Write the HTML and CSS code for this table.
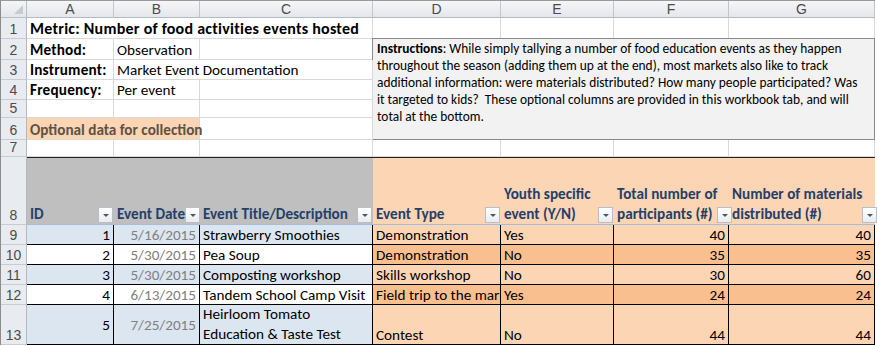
FILE: index.html
```html
<!DOCTYPE html>
<html>
<head>
<meta charset="utf-8">
<link rel="stylesheet" href="styles.css">
</head>
<body>
<div class="sheet">
  <!-- column header row -->
  <div class="corner"><span class="tri"></span></div>
  <div class="colhdr">A</div>
  <div class="colhdr">B</div>
  <div class="colhdr">C</div>
  <div class="colhdr">D</div>
  <div class="colhdr">E</div>
  <div class="colhdr">F</div>
  <div class="colhdr">G</div>

  <!-- row 1 -->
  <div class="rowhdr">1</div>
  <div class="cell span3 title">Metric: Number of food activities events hosted</div>
  <div class="cell"></div>
  <div class="cell"></div>
  <div class="cell"></div>
  <div class="cell"></div>

  <!-- row 2 -->
  <div class="rowhdr">2</div>
  <div class="cell label">Method:</div>
  <div class="cell">Observation</div>
  <div class="cell"></div>
  <div class="instructions">
    <p><b>Instructions</b>: While simply tallying a number of food education events as they happen<br>throughout the season (adding them up at the end), most markets also like to track<br>additional information: were materials distributed? How many people participated? Was<br>it targeted to kids?&nbsp; These optional columns are provided in this workbook tab, and will<br>total at the bottom.</p>
  </div>

  <!-- row 3 -->
  <div class="rowhdr">3</div>
  <div class="cell label">Instrument:</div>
  <div class="cell span2">Market Event Documentation</div>

  <!-- row 4 -->
  <div class="rowhdr">4</div>
  <div class="cell label">Frequency:</div>
  <div class="cell">Per event</div>
  <div class="cell"></div>

  <!-- row 5 -->
  <div class="rowhdr">5</div>
  <div class="cell"></div>
  <div class="cell"></div>
  <div class="cell"></div>

  <!-- row 6 -->
  <div class="rowhdr">6</div>
  <div class="cell span2 optional">Optional data for collection</div>
  <div class="cell"></div>

  <!-- row 7 -->
  <div class="rowhdr">7</div>
  <div class="cell"></div>
  <div class="cell"></div>
  <div class="cell"></div>
  <div class="cell"></div>
  <div class="cell"></div>
  <div class="cell"></div>
  <div class="cell"></div>

  <!-- row 8 table header -->
  <div class="rowhdr">8</div>
  <div class="th gray"><span>ID</span><i class="dd"></i></div>
  <div class="th gray"><span>Event Date</span><i class="dd"></i></div>
  <div class="th gray"><span>Event Title/Description</span><i class="dd"></i></div>
  <div class="th peach"><span>Event Type</span><i class="dd"></i></div>
  <div class="th peach"><span>Youth specific<br>event (Y/N)</span><i class="dd"></i></div>
  <div class="th peach"><span>Total number of<br>participants (#)</span><i class="dd"></i></div>
  <div class="th peach last"><span>Number of materials<br>distributed (#)</span><i class="dd"></i></div>

  <!-- row 9 -->
  <div class="rowhdr">9</div>
  <div class="td blue num">1</div>
  <div class="td blue date">5/16/2015</div>
  <div class="td blue">Strawberry Smoothies</div>
  <div class="td p1">Demonstration</div>
  <div class="td p1">Yes</div>
  <div class="td p1 num">40</div>
  <div class="td p1 num">40</div>

  <!-- row 10 -->
  <div class="rowhdr">10</div>
  <div class="td white num">2</div>
  <div class="td white date">5/30/2015</div>
  <div class="td white">Pea Soup</div>
  <div class="td p2">Demonstration</div>
  <div class="td p2">No</div>
  <div class="td p2 num">35</div>
  <div class="td p2 num">35</div>

  <!-- row 11 -->
  <div class="rowhdr">11</div>
  <div class="td blue num">3</div>
  <div class="td blue date">5/30/2015</div>
  <div class="td blue">Composting workshop</div>
  <div class="td p1">Skills workshop</div>
  <div class="td p1">No</div>
  <div class="td p1 num">30</div>
  <div class="td p1 num">60</div>

  <!-- row 12 -->
  <div class="rowhdr">12</div>
  <div class="td white num">4</div>
  <div class="td white date">6/13/2015</div>
  <div class="td white">Tandem School Camp Visit</div>
  <div class="td p2 clip">Field trip to the market</div>
  <div class="td p2">Yes</div>
  <div class="td p2 num">24</div>
  <div class="td p2 num">24</div>

  <!-- row 13 -->
  <div class="rowhdr">13</div>
  <div class="td blue num mid">5</div>
  <div class="td blue date mid">7/25/2015</div>
  <div class="td blue wrap">Heirloom Tomato<br>Education &amp; Taste Test</div>
  <div class="td p1">Contest</div>
  <div class="td p1">No</div>
  <div class="td p1 num">44</div>
  <div class="td p1 num">44</div>
</div>
</body>
</html>
```

FILE: styles.css
```css
* { box-sizing: border-box; margin: 0; padding: 0; }

html, body {
  background: #ffffff;
}

body {
  margin: 0;
  font-family: Carlito, Calibri, Lato, "Liberation Sans", sans-serif;
  font-size: 15.2px;
  color: #000;
}

.sheet {
  display: grid;
  grid-template-columns: 26px 87px 86px 173px 128px 113px 115px 146px;
  grid-template-rows: 17px 21px 21px 20px 20px 18px 22px 17px 68px 20px 20px 20px 20px 40px;
  border-top: 1px solid #9a9a9a;
  border-left: 1px solid #8c8c8c;
  width: 875px;
}

.corner {
  background: linear-gradient(#f4f5f7, #e3e6ea);
  border-right: 1px solid #b9bec6;
  border-bottom: 1px solid #b9bec6;
  position: relative;
}
.corner .tri {
  position: absolute;
  right: 3px;
  bottom: 3px;
  width: 0;
  height: 0;
  border-left: 9px solid transparent;
  border-bottom: 9px solid #c8ccd2;
}

.colhdr {
  background: linear-gradient(#f5f6f8, #e4e7eb);
  border-right: 1px solid #c2c6cc;
  border-bottom: 1px solid #b4b9c1;
  font-family: "Liberation Sans", Arial, sans-serif;
  font-size: 14px;
  color: #4b4b4b;
  text-align: center;
  line-height: 16px;
}

.rowhdr {
  background: #e8ebef;
  border-right: 1px solid #b4b9c1;
  border-bottom: 1px solid #c8ccd2;
  font-family: "Liberation Sans", Arial, sans-serif;
  font-size: 14px;
  color: #4b4b4b;
  text-align: center;
  display: flex;
  align-items: flex-end;
  justify-content: center;
  padding-bottom: 1px;
  line-height: 16px;
}

.cell {
  border-right: 1px solid #d9d9d9;
  border-bottom: 1px solid #d9d9d9;
  padding: 0 3px 0 3px;
  display: flex;
  align-items: flex-end;
  white-space: nowrap;
  line-height: 18px;
  overflow: visible;
}

.span2 { grid-column: span 2; }
.span3 { grid-column: span 3; }

.title, .label { font-weight: bold; }
.title { font-size: 16px; letter-spacing: 0.25px; line-height: 19px; }
.label { letter-spacing: 0.2px; }

.optional {
  background: #fcd5b4;
  font-weight: bold;
  color: #5e5246;
}

.instructions {
  grid-column: span 4;
  grid-row: span 5;
  background: #f2f2f2;
  border: 1px solid #8a8a8a;
  margin-left: -1px;
  margin-top: -1px;
  padding: 1px 4px 0 4px;
  font-size: 13.4px;
  line-height: 17px;
  white-space: nowrap;
}

.th {
  border-top: 1px solid #222;
  border-bottom: 1px solid #a9bcd6;
  display: flex;
  align-items: flex-end;
  justify-content: space-between;
  padding: 0 1px 0 3px;
  font-weight: bold;
  color: #253f6b;
  line-height: 20px;
  white-space: nowrap;
}
.th.gray { background: #bfbfbf; }
.th.peach { background: #fcd5b4; }
.th span { padding-bottom: 0; }

.dd {
  display: block;
  flex: none;
  width: 15px;
  height: 16px;
  margin-bottom: 1px;
  border: 1px solid #b7bec9;
  background: linear-gradient(#ffffff, #e7ecf3);
  position: relative;
}
.dd::after {
  content: "";
  position: absolute;
  left: 4px;
  top: 6px;
  width: 0;
  height: 0;
  border-left: 3px solid transparent;
  border-right: 3px solid transparent;
  border-top: 3px solid #555;
}

.td {
  border-right: 1px solid #000;
  border-bottom: 1px solid #000;
  padding: 0 3px 0 3px;
  display: flex;
  align-items: flex-end;
  white-space: nowrap;
  overflow: hidden;
  line-height: 18px;
}
.td.clip { padding-right: 0; }
.td.blue { background: #dce6f1; }
.td.white { background: #ffffff; }
.td.p1 { background: #fcd5b4; }
.td.p2 { background: #fabf8f; }
.td.num { justify-content: flex-end; }
.td.date { justify-content: flex-end; color: #808080; }
.td.mid { align-items: center; }
.td.wrap { white-space: normal; line-height: 20px; }
```
